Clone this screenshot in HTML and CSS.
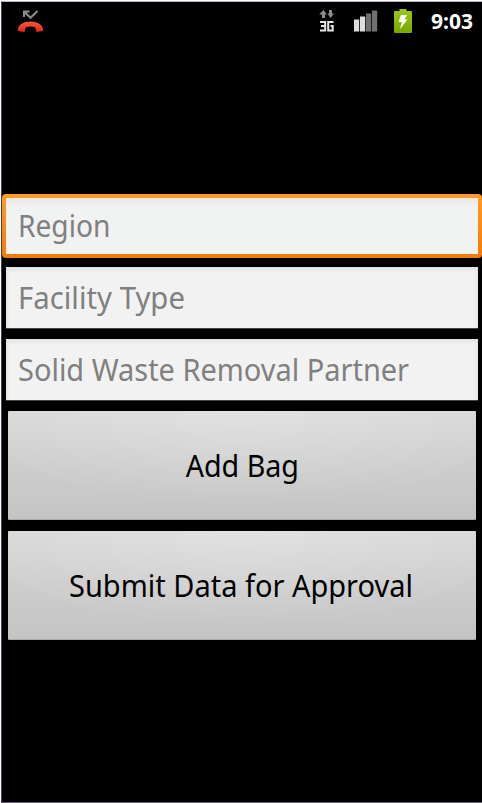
FILE: index.html
```html
<!DOCTYPE html>
<html lang="en">
<head>
<meta charset="utf-8">
<title>Waste collection</title>
<link rel="stylesheet" href="styles.css">
</head>
<body>
<div class="screen">
  <header class="status">
    <svg class="missed" width="28" height="26" viewBox="0 0 28 26">
      <defs><linearGradient id="red" x1="0" y1="0" x2="0" y2="1"><stop offset="0" stop-color="#ff5a40"/><stop offset="1" stop-color="#e02415"/></linearGradient></defs>
      <path d="M7 8V2.500H12.500M7.500 3L13.500 8.800L20.500 2" fill="none" stroke="#8d8d8d" stroke-width="2"/>
      <path d="M1 20.500C1.500 9.800 25.500 9.800 26 20.500V22L19.500 23L18.300 18.500Q13.500 16.500 8.700 18.500L7.500 23L1 22Z" fill="url(#red)"/>
    </svg>
    <div class="indicators">
      <svg class="network" width="16" height="24" viewBox="0 0 16 24">
        <path d="M4.500 0L8 4.500H6V8H3V4.500H0ZM8.500 3.500H10V0H13V3.500H15L11.500 8Z" fill="#8d8d8d"/>
        <path d="M1 12H6.200V20.500H1M2 16H6M14.500 12H9.200V20.500H13.700V16H11.500" fill="none" stroke="#e6e6e6" stroke-width="2"/>
      </svg>
      <svg class="signal" width="24" height="22" viewBox="0 0 24 22">
        <path d="M0 9.500h5.200v12H0ZM6 6.500h5.200v15H6Z" fill="#dedede"/>
        <path d="M12 3.500h5.200v18h-5.200ZM18 .500h5.200v21h-5.200Z" fill="#707070"/>
      </svg>
      <svg class="battery" width="18" height="25" viewBox="0 0 18 25">
        <defs><linearGradient id="green" x1="0" y1="0" x2="0" y2="1"><stop offset="0" stop-color="#9bc91a"/><stop offset="1" stop-color="#76a800"/></linearGradient></defs>
        <path d="M1 2H5.500V0H12.500V2H17Q18 2 18 3V23Q18 24 17 24H1Q0 24 0 23V3Q0 2 1 2Z" fill="url(#green)"/>
        <path d="M7 6H13L10.500 10.500H13.500L6 20L7.800 13H4.500Z" fill="#fff"/>
      </svg>
      <span class="clock">9:03</span>
    </div>
  </header>
  <main class="form">
    <div class="field focused"><span class="region">Region</span></div>
    <div class="field"><span class="facility">Facility Type</span></div>
    <div class="field"><span class="partner">Solid Waste Removal Partner</span></div>
    <button class="action"><span class="add">Add Bag</span></button>
    <button class="action"><span class="submit">Submit Data for Approval</span></button>
  </main>
</div>
</body>
</html>
```
FILE: styles.css
```css
* { box-sizing: border-box; }
body { margin: 0; background: #fff; }
.screen {
  width: 481px; height: 802px; margin: 1px 0 0 1px; overflow: hidden;
  background: #000; border-top: 1px solid #b4b8ca; border-left: 1px solid #44405c; border-bottom: 1px solid #64587c;
  font-family: "Noto Sans", "Open Sans", sans-serif;
}
.status { height: 38px; display: flex; justify-content: space-between; align-items: flex-start; }
.missed { margin: 7px 0 0 15px; }
.indicators { display: flex; align-items: flex-start; padding-right: 9px; }
.network { margin: 8px 19px 0 0; }
.signal { margin: 8px 16px 0 0; }
.battery { margin: 7px 19px 0 0; }
.clock { width: 42px; height: 38px; line-height: 38px; font-size: 21px; font-weight: 700; color: #fff; white-space: nowrap; }
.form { padding-top: 154px; display: flex; flex-direction: column; }
.field {
  height: 62px; margin: 0 4px 10px; padding-left: 12px; line-height: 62px; font-size: 30px; color: #808080;
  background: #f2f2f2; border-bottom: 1px solid #444; white-space: nowrap;
  box-shadow: inset 0 4px 5px -2px #e0e0e0, inset 4px 0 5px -3px #e6e6e6, inset -4px 0 5px -3px #e6e6e6;
}
.field.focused {
  height: 64px; margin: 0 0 9px; padding: 4px; line-height: 56px; border: 0; border-radius: 4px;
  background: linear-gradient(#e7e7e7, #f1f2f2 8px) content-box, linear-gradient(#ff9c28, #f57a05);
  box-shadow: none;
}
.field.focused span { margin-left: 12px; }
.field span, .action span { display: inline-block; transform-origin: 0 50%; }
.field .region { transform: scaleX(.938); }
.field .facility { transform: scaleX(.978); }
.field .partner { transform: scaleX(.965); }
.action {
  height: 109px; margin: 0 6px 11px; padding: 0; border: 0; border-bottom: 1px solid #a9aaa9; border-radius: 1px;
  background: radial-gradient(ellipse 60% 90% at 50% 0, #ffffff38, #ffffff00), linear-gradient(#d9d9d9, #c3c3c3);
  font: 30px/110px "Noto Sans", "Open Sans", sans-serif; color: #000; white-space: nowrap;
}
.action span { transform-origin: 50% 50%; }
.action .add { transform: scaleX(.955); }
.action .submit { transform: translateX(-1px) scaleX(.966); }
```
